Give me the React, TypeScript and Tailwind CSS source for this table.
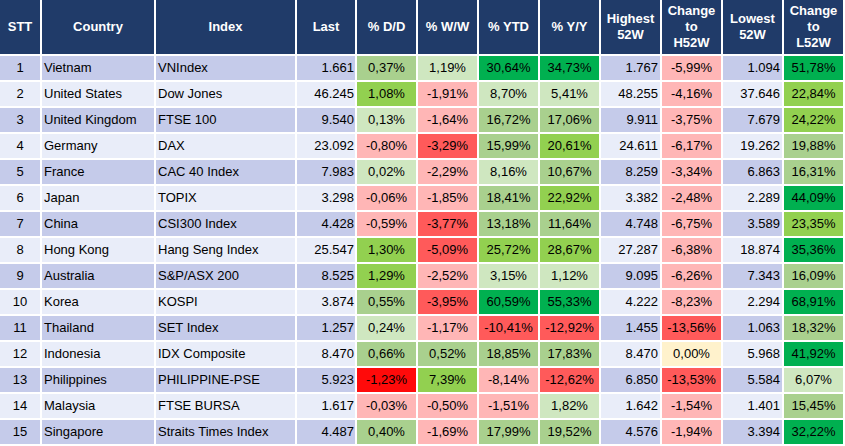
import { clsx } from 'clsx';

// heat colours for the % cells
const HEAT: Record<string, string> = {
  sg: 'bg-[#00b050]',
  g: 'bg-[#92d050]',
  mg: 'bg-[#a9d08e]',
  lg: 'bg-[#cfe7c0]',
  y: 'bg-[#fff2cc]',
  lr: 'bg-[#ffb6b6]',
  r: 'bg-[#ff5a5a]',
  sr: 'bg-[#ff0a0a]',
};

type Pct = [string, string];

interface Row {
  country: string;
  index: string;
  last: string;
  dd: Pct;
  ww: Pct;
  ytd: Pct;
  yy: Pct;
  high: string;
  chH: Pct;
  low: string;
  chL: Pct;
}

const ROWS: Row[] = [
  { country: 'Vietnam', index: 'VNIndex', last: '1.661', dd: ['0,37%', 'mg'], ww: ['1,19%', 'lg'], ytd: ['30,64%', 'sg'], yy: ['34,73%', 'sg'], high: '1.767', chH: ['-5,99%', 'lr'], low: '1.094', chL: ['51,78%', 'sg'] },
  { country: 'United States', index: 'Dow Jones', last: '46.245', dd: ['1,08%', 'g'], ww: ['-1,91%', 'lr'], ytd: ['8,70%', 'lg'], yy: ['5,41%', 'lg'], high: '48.255', chH: ['-4,16%', 'lr'], low: '37.646', chL: ['22,84%', 'g'] },
  { country: 'United Kingdom', index: 'FTSE 100', last: '9.540', dd: ['0,13%', 'lg'], ww: ['-1,64%', 'lr'], ytd: ['16,72%', 'mg'], yy: ['17,06%', 'mg'], high: '9.911', chH: ['-3,75%', 'lr'], low: '7.679', chL: ['24,22%', 'g'] },
  { country: 'Germany', index: 'DAX', last: '23.092', dd: ['-0,80%', 'lr'], ww: ['-3,29%', 'r'], ytd: ['15,99%', 'mg'], yy: ['20,61%', 'g'], high: '24.611', chH: ['-6,17%', 'lr'], low: '19.262', chL: ['19,88%', 'mg'] },
  { country: 'France', index: 'CAC 40 Index', last: '7.983', dd: ['0,02%', 'lg'], ww: ['-2,29%', 'lr'], ytd: ['8,16%', 'lg'], yy: ['10,67%', 'mg'], high: '8.259', chH: ['-3,34%', 'lr'], low: '6.863', chL: ['16,31%', 'mg'] },
  { country: 'Japan', index: 'TOPIX', last: '3.298', dd: ['-0,06%', 'lr'], ww: ['-1,85%', 'lr'], ytd: ['18,41%', 'mg'], yy: ['22,92%', 'g'], high: '3.382', chH: ['-2,48%', 'lr'], low: '2.289', chL: ['44,09%', 'sg'] },
  { country: 'China', index: 'CSI300 Index', last: '4.428', dd: ['-0,59%', 'lr'], ww: ['-3,77%', 'r'], ytd: ['13,18%', 'mg'], yy: ['11,64%', 'mg'], high: '4.748', chH: ['-6,75%', 'lr'], low: '3.589', chL: ['23,35%', 'g'] },
  { country: 'Hong Kong', index: 'Hang Seng Index', last: '25.547', dd: ['1,30%', 'g'], ww: ['-5,09%', 'r'], ytd: ['25,72%', 'g'], yy: ['28,67%', 'g'], high: '27.287', chH: ['-6,38%', 'lr'], low: '18.874', chL: ['35,36%', 'sg'] },
  { country: 'Australia', index: 'S&P/ASX 200', last: '8.525', dd: ['1,29%', 'g'], ww: ['-2,52%', 'lr'], ytd: ['3,15%', 'lg'], yy: ['1,12%', 'lg'], high: '9.095', chH: ['-6,26%', 'lr'], low: '7.343', chL: ['16,09%', 'mg'] },
  { country: 'Korea', index: 'KOSPI', last: '3.874', dd: ['0,55%', 'mg'], ww: ['-3,95%', 'r'], ytd: ['60,59%', 'sg'], yy: ['55,33%', 'sg'], high: '4.222', chH: ['-8,23%', 'lr'], low: '2.294', chL: ['68,91%', 'sg'] },
  { country: 'Thailand', index: 'SET Index', last: '1.257', dd: ['0,24%', 'lg'], ww: ['-1,17%', 'lr'], ytd: ['-10,41%', 'r'], yy: ['-12,92%', 'r'], high: '1.455', chH: ['-13,56%', 'r'], low: '1.063', chL: ['18,32%', 'mg'] },
  { country: 'Indonesia', index: 'IDX Composite', last: '8.470', dd: ['0,66%', 'mg'], ww: ['0,52%', 'mg'], ytd: ['18,85%', 'mg'], yy: ['17,83%', 'mg'], high: '8.470', chH: ['0,00%', 'y'], low: '5.968', chL: ['41,92%', 'sg'] },
  { country: 'Philippines', index: 'PHILIPPINE-PSE', last: '5.923', dd: ['-1,23%', 'sr'], ww: ['7,39%', 'g'], ytd: ['-8,14%', 'lr'], yy: ['-12,62%', 'r'], high: '6.850', chH: ['-13,53%', 'r'], low: '5.584', chL: ['6,07%', 'lg'] },
  { country: 'Malaysia', index: 'FTSE BURSA', last: '1.617', dd: ['-0,03%', 'lr'], ww: ['-0,50%', 'lr'], ytd: ['-1,51%', 'lr'], yy: ['1,82%', 'lg'], high: '1.642', chH: ['-1,54%', 'lr'], low: '1.401', chL: ['15,45%', 'mg'] },
  { country: 'Singapore', index: 'Straits Times Index', last: '4.487', dd: ['0,40%', 'mg'], ww: ['-1,69%', 'lr'], ytd: ['17,99%', 'mg'], yy: ['19,52%', 'mg'], high: '4.576', chH: ['-1,94%', 'lr'], low: '3.394', chL: ['32,22%', 'sg'] },
];

const HEADERS = ['STT', 'Country', 'Index', 'Last', '% D/D', '% W/W', '% YTD', '% Y/Y', 'Highest\n52W', 'Change\nto\nH52W', 'Lowest\n52W', 'Change\nto\nL52W'];

function PctCell({ v }: { v: Pct }) {
  return <div className={clsx('flex items-center justify-center', HEAT[v[1]])}>{v[0]}</div>;
}

export default function App() {
  return (
    <div className="w-[845px] h-[446px] bg-white font-['Liberation_Sans',Arial,sans-serif] text-[13px] text-black">
      <div className="grid grid-cols-[40px_112px_139px_58px_repeat(8,59px)] grid-rows-[54px_repeat(15,24px)] gap-[2px]">
        {HEADERS.map(h => (
          <div key={h} className="flex items-center justify-center whitespace-pre-line text-center bg-[#203b69] text-white font-bold leading-[16px]">
            {h}
          </div>
        ))}
        {ROWS.map((r, i) => {
          const band = i % 2 === 0 ? 'bg-[#c5cbea]' : 'bg-[#e9edf9]';
          return [
            <div key={`s${i}`} className={clsx('flex items-center justify-center', band)}>{i + 1}</div>,
            <div key={`c${i}`} className={clsx('flex items-center pl-[2px]', band)}>{r.country}</div>,
            <div key={`x${i}`} className={clsx('flex items-center pl-[2px]', band)}>{r.index}</div>,
            <div key={`l${i}`} className={clsx('flex items-center justify-end pr-[1px]', band)}>{r.last}</div>,
            <PctCell key={`d${i}`} v={r.dd} />,
            <PctCell key={`w${i}`} v={r.ww} />,
            <PctCell key={`t${i}`} v={r.ytd} />,
            <PctCell key={`y${i}`} v={r.yy} />,
            <div key={`h${i}`} className={clsx('flex items-center justify-end pr-[2px]', band)}>{r.high}</div>,
            <PctCell key={`hc${i}`} v={r.chH} />,
            <div key={`o${i}`} className={clsx('flex items-center justify-end pr-[2px]', band)}>{r.low}</div>,
            <PctCell key={`lc${i}`} v={r.chL} />,
          ];
        })}
      </div>
    </div>
  );
}
